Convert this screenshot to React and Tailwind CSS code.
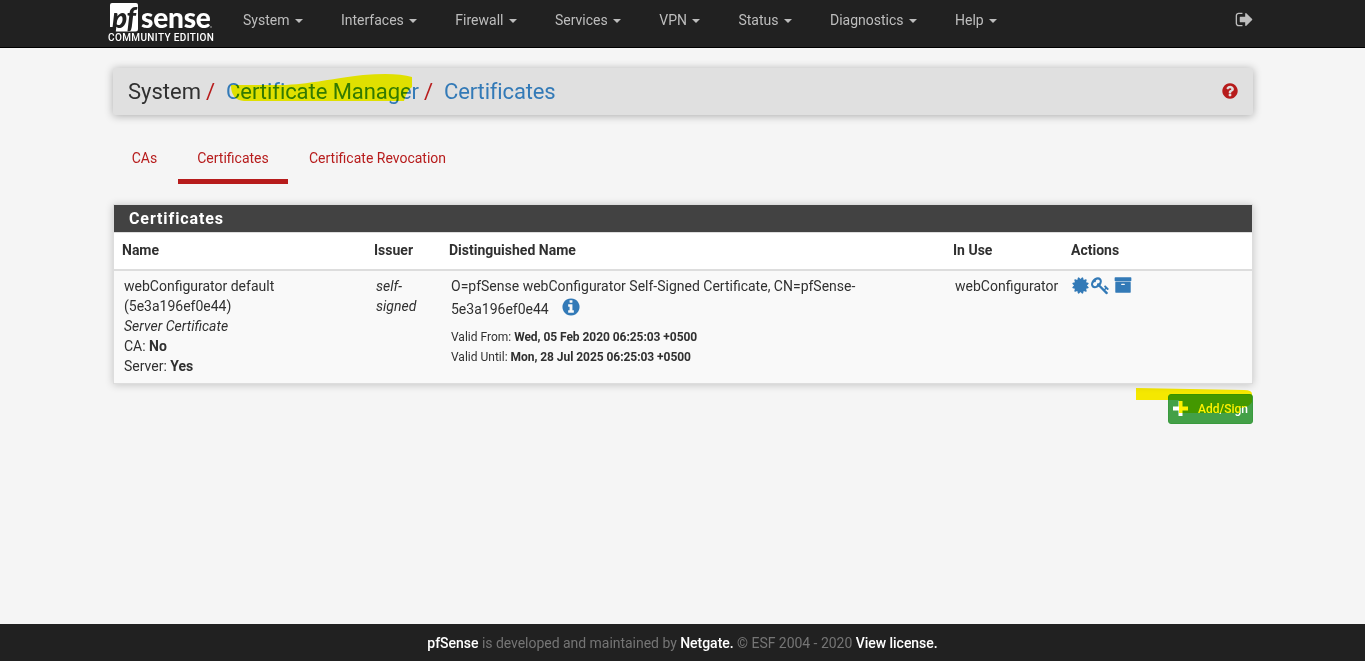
import React from "react";

const KEY =
  "M832 512q0-80-56-136t-136-56-136 56-56 136q0 42 19 83-41-19-83-19-80 0-136 56t-56 136 56 136 136 56 136-56 56-136q0-42-19-83 41 19 83 19 80 0 136-56t56-136zm851 704q0 17-49 66t-66 49q-9 0-28.5-16t-36.5-33-38.5-40-24.5-26l-96 96 220 220q28 28 28 68 0 42-39 81t-81 39q-40 0-68-28l-671-671q-176 131-365 131-163 0-265.5-102.5t-102.5-265.5q0-160 95-313t248-248 313-95q163 0 265.5 102.5t102.5 265.5q0 189-131 365l355 355 96-96q-3-3-26-24.5t-40-38.5-33-36.5-16-28.5q0-17 49-66t66-49q13 0 23 10 6 6 46 44.5t82 79.5 86.5 86 73 78 28.5 41z";
const SEAL =
  "M1504 896l138 135q30 28 20 70-12 41-52 51l-188 48 53 186q12 41-19 70-29 31-70 19l-186-53-48 188q-10 40-51 52-12 2-19 2-31 0-51-22l-135-138-135 138q-28 30-70 20-41-11-51-52l-48-188-186 53q-41 12-70-19-31-29-19-70l53-186-188-48q-40-10-52-51-10-42 20-70l138-135-138-135q-30-28-20-70 12-41 52-51l188-48-53-186q-12-41 19-70 29-31 70-19l186 53 48-188q10-41 51-51 41-12 70 19l135 139 135-139q29-30 70-19 41 10 51 51l48 188 186-53q41-12 70 19 31 29 19 70l-53 186 188 48q40 10 52 51 10 42-20 70z";
const SIGN_OUT =
  "M704 1440q0 4 1 20t.5 26.5-3 23.5-10 19.5-20.5 6.5h-320q-119 0-203.5-84.5t-84.5-203.5v-704q0-119 84.5-203.5t203.5-84.5h320q13 0 22.5 9.5t9.5 22.5q0 4 1 20t.5 26.5-3 23.5-10 19.5-20.5 6.5h-320q-66 0-113 47t-47 113v704q0 66 47 113t113 47h312l11.5 1 11.5 3 8 5.5 7 9 2 13.5zm928-544q0 26-19 45l-544 544q-19 19-45 19t-45-19-19-45v-288h-448q-26 0-45-19t-19-45v-384q0-26 19-45t45-19h448v-288q0-26 19-45t45-19 45 19l544 544q19 19 19 45z";
const DISC =
  "m0 0M1664 896q0 209-103 385.5t-279.5 279.5-385.5 103-385.500-103-279.500-279.500-103-385.500 103-385.500 279.500-279.500 385.500-103 385.500 103 279.500 279.500 103 385.500z";
const INFO =
  "M1152 1376v-160q0-14-9-23t-23-9h-96v-512q0-14-9-23t-23-9h-320q-14 0-23 9t-9 23v160q0 14 9 23t23 9h96v320h-96q-14 0-23 9t-9 23v160q0 14 9 23t23 9h448q14 0 23-9t9-23zm-128-896v-160q0-14-9-23t-23-9h-192q-14 0-23 9t-9 23v160q0 14 9 23t23 9h192q14 0 23-9t9-23z" + DISC;
const QUESTION =
  "M1024 1376v-192q0-14-9-23t-23-9h-192q-14 0-23 9t-9 23v192q0 14 9 23t23 9h192q14 0 23-9t9-23zm256-672q0-88-55.5-163t-138.5-116-170-41q-243 0-371 213-15 24 8 42l132 100q7 6 19 6 16 0 25-12 53-68 86-92 34-24 86-24 48 0 85.5 26t37.5 59q0 38-20 61t-68 45q-63 28-115.5 86.5t-52.5 125.500v36q0 14 9 23t23 9h192q14 0 23-9t9-23q0-19 21.5-49.5t54.5-49.5q32-18 49-28.5t46-35 44.500-48 28-60.5 12.500-81z" + DISC;
const ARCHIVE =
  "M1088 832q0-26-19-45t-45-19h-256q-26 0-45 19t-19 45 19 45 45 19h256q26 0 45-19t19-45zm576-192v960q0 26-19 45t-45 19h-1408q-26 0-45-19t-19-45v-960q0-26 19-45t45-19h1408q26 0 45 19t19 45zm64-448v256q0 26-19 45t-45 19h-1536q-26 0-45-19t-19-45v-256q0-26 19-45t45-19h1536q26 0 45 19t19 45z";

function Glyph({ d, className }) {
  return (
    <svg viewBox="0 0 1792 1792" fill="currentColor" fillRule="evenodd" className={className}>
      <path d={d} />
    </svg>
  );
}

function Logo() {
  return (
    <div className="w-[106px] h-[47px] pt-[3px] text-white shrink-0">
      <div className="flex h-[29px] pl-0.5">
        <div className="relative w-[29px] h-[29px] shrink-0">
          <svg viewBox="0 0 29 29" className="w-[29px] h-[29px] block" fill="#fff">
            <path d="M2 0H26Q28 0 28 2V26Q28 28.500 25.500 28.500H3L4 24H0V2Q0 0 2 0Z" />
          </svg>
          <span className="absolute left-[2px] top-0 text-[28px] leading-[28px] font-[Lato,sans-serif] font-black italic tracking-[-0.5px] text-[#212121]">
            pf
          </span>
        </div>
        <span className="ml-[2px] text-[28px] leading-[29px] font-[Lato,sans-serif] font-black tracking-[-0.2px]">sense</span>
        <span className="mt-[23px] -ml-px w-0.5 h-0.5 rounded-full bg-[#757575] shrink-0" />
      </div>
      <div className="text-[10px] leading-[12px] font-medium tracking-[0.38px] whitespace-nowrap">COMMUNITY EDITION</div>
    </div>
  );
}

const NAV = ["System", "Interfaces", "Firewall", "Services", "VPN", "Status", "Diagnostics", "Help"];

function Navbar() {
  return (
    <header className="h-12 bg-[#212121] border-b border-black">
      <div className="w-[1149px] ml-[108px] h-[47px] flex">
        <Logo />
        <nav className="flex ml-[29px] gap-[38px] text-sm leading-5 text-[#bdbdbd] pt-[10px]">
          {NAV.map((n) => (
            <div key={n} className="flex h-5">
              {n}
              <span className="ml-[5.5px] mt-[9px] w-0 h-0 border-x-4 border-x-transparent border-t-4 border-t-[#bdbdbd]" />
            </div>
          ))}
        </nav>
        <Glyph d={SIGN_OUT} className="ml-auto mr-[3px] mt-[10px] w-[19px] h-[19px] text-[#bdbdbd]" />
      </div>
    </header>
  );
}

function Breadcrumb() {
  return (
    <div className="mt-[20px] w-[1140px] h-[47px] bg-[#e0e0e0] rounded-[2px] shadow-[0_1px_8px_rgba(0,0,0,0.3)] flex items-center pl-[15px] pr-[14px] text-[22px] text-[#303030]">
      <div className="flex items-center">
        <span>System</span>
        <span className="ml-[5px] text-[#b71c1c]">/</span>
        <span className="relative ml-[11px] text-[#337ab7] tracking-[-0.06px]">
          Certificate Manager
          <svg viewBox="0 0 186 30" className="absolute left-0 top-[-2px] w-[186px] h-[30px] mix-blend-multiply overflow-visible">
            <path d="M5 12H60C90 10 103 6 137 2Q170 -1 186 4V14Q181 17 178 28H18Q5 27 5 12Z" fill="#ffff00" />
          </svg>
        </span>
        <span className="ml-[5px] text-[#b71c1c]">/</span>
        <span className="ml-[11px] text-[#337ab7] tracking-[-0.15px]">Certificates</span>
      </div>
      <Glyph d={QUESTION} className="ml-auto -mt-px w-[18px] h-[18px] text-[#b71c1c]" />
    </div>
  );
}

function Tabs() {
  return (
    <div className="mt-[17px] flex h-[52px] text-sm text-[#b71c1c] leading-[52px]">
      <div className="w-[65px] text-center pr-[2px]">CAs</div>
      <div className="w-[110px] text-center border-b-[5px] border-[#b71c1c]">Certificates</div>
      <div className="pl-[21px]">Certificate Revocation</div>
    </div>
  );
}

const COLS = "grid grid-cols-[252px_75px_504px_118px_1fr]";

function CertificateTable() {
  return (
    <section className="mt-[20px] w-[1140px] border border-[#ddd] bg-white shadow-[0_1px_8px_rgba(0,0,0,0.2)]">
      <h2 className="h-[27px] bg-[#424242] text-white pl-[15px] text-[16px] leading-[27px] font-bold tracking-[0.9px]">Certificates</h2>
      <div className={`${COLS} h-[39px] border-t border-b-2 border-[#ddd] pl-2 text-sm leading-[35px] font-bold`}>
        <span>Name</span>
        <span>Issuer</span>
        <span>Distinguished Name</span>
        <span>In Use</span>
        <span>Actions</span>
      </div>
      <div className={`${COLS} h-[112px] bg-[#f9f9f9] pl-[10px] pt-[5px] text-sm leading-5`}>
        <div>
          <div>webConfigurator default</div>
          <div>(5e3a196ef0e44)</div>
          <div className="italic">Server Certificate</div>
          <div>CA: <b>No</b></div>
          <div>Server: <b>Yes</b></div>
        </div>
        <div className="italic">self-<br />signed</div>
        <div>
          <div>O=pfSense webConfigurator Self-Signed Certificate, CN=pfSense-</div>
          <div className="flex h-[26px] pt-[3px]">
            5e3a196ef0e44
            <Glyph d={INFO} className="ml-[12px] -mt-[2px] w-5 h-5 text-[#337ab7]" />
          </div>
          <div className="pt-[5px] text-[12px]">Valid From: <b className="tracking-[-0.05px]">Wed, 05 Feb 2020 06:25:03 +0500</b></div>
          <div className="text-[12px]">Valid Until: <b className="tracking-[-0.05px]">Mon, 28 Jul 2025 06:25:03 +0500</b></div>
        </div>
        <div>webConfigurator</div>
        <div className="flex text-[#337ab7]">
          <Glyph d={SEAL} className="w-[19px] h-[19px] -ml-[2px]" />
          <Glyph d={KEY} className="w-[19px] h-[19px] ml-px" />
          <Glyph d={ARCHIVE} className="w-[18px] h-[18px] ml-[4px]" />
        </div>
      </div>
    </section>
  );
}

function AddButton() {
  return (
    <div className="relative mt-[10px] flex justify-end w-[1140px]">
      <button className="w-[85px] h-[30px] rounded-[3px] border border-[#399a3d] bg-[#43a047] text-white text-xs font-medium flex items-center pl-1">
        <svg viewBox="0 0 15 15" className="w-[15px] h-[15px] -mt-px shrink-0" fill="currentColor">
          <path d="M5.500 0H9.500V5.500H15V9.500H9.500V15H5.500V9.500H0V5.500H5.500Z" />
        </svg>
        <span className="ml-[10px]">Add/Sign</span>
      </button>
      <svg viewBox="0 0 117 28" className="absolute right-0 top-[-6px] w-[117px] h-[28px] mix-blend-multiply">
        <path d="M0 0L108 2Q116 2 116 6V14Q114 19 104 20V25H43V12H0Z" fill="#fff200" />
      </svg>
    </div>
  );
}

export default function App() {
  return (
    <div className="h-[661px] w-[1365px] overflow-hidden flex flex-col bg-[#f5f5f5] text-[#303030] font-[Roboto,sans-serif]">
      <Navbar />
      <main className="flex-1 ml-[113px] w-[1140px]">
        <Breadcrumb />
        <Tabs />
        <CertificateTable />
        <AddButton />
      </main>
      <footer className="h-[37px] bg-[#212121] text-[#757575] text-center text-sm leading-[38px] tracking-[-0.03px]">
        <span className="text-white font-medium">pfSense</span> is developed and maintained by{" "}
        <span className="text-white font-medium">Netgate.</span> © ESF 2004 - 2020{" "}
        <span className="text-white font-medium">View license.</span>
      </footer>
    </div>
  );
}
